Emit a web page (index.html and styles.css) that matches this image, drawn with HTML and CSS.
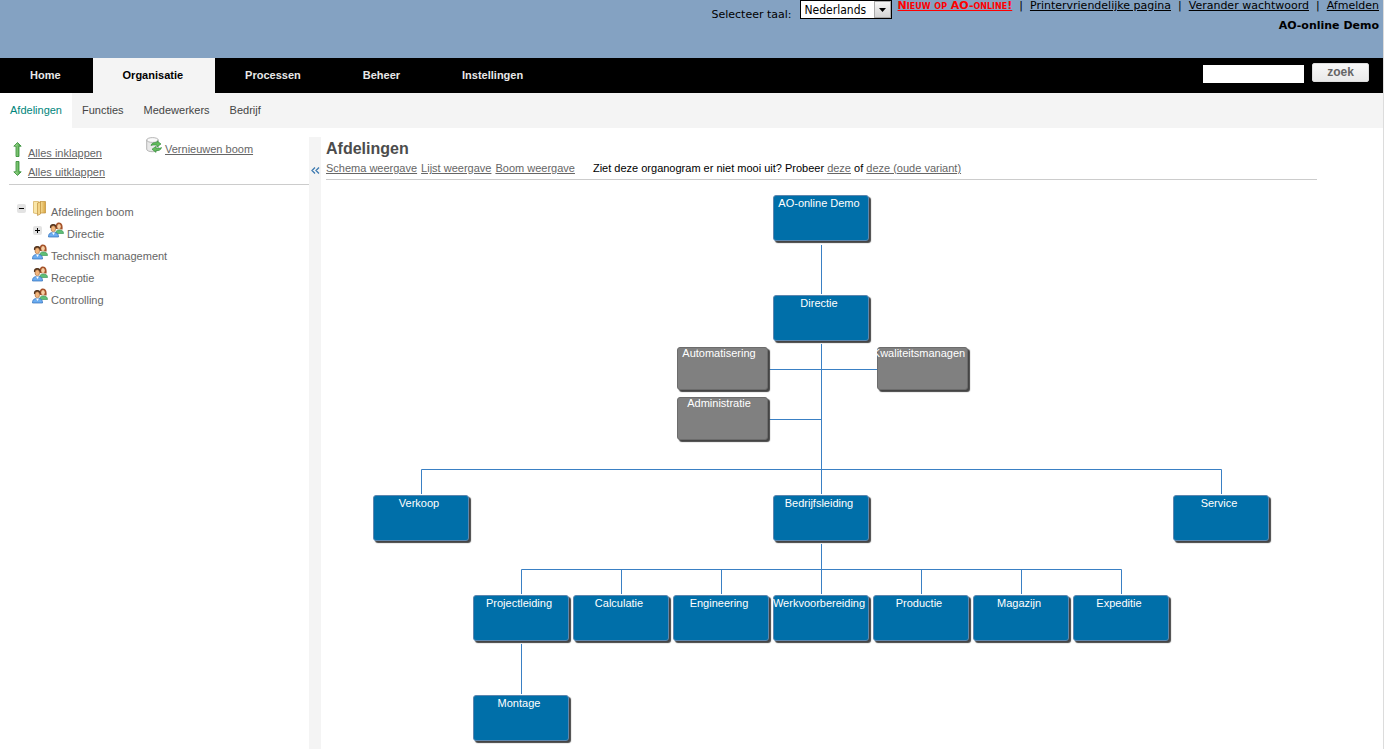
FILE: index.html
```
<!DOCTYPE html>
<html lang="nl">
<head>
<meta charset="utf-8">
<title>AO-online Demo - Afdelingen</title>
<link rel="stylesheet" href="styles.css">
</head>
<body>
<svg class="defs" width="0" height="0" aria-hidden="true">
  <defs>
    <linearGradient id="folderFill" x1="0" x2="1"><stop offset="0" stop-color="#f8e3a0"/><stop offset="1" stop-color="#d9a441"/></linearGradient>
    <linearGradient id="arrowFill" x1="0" x2="1"><stop offset="0" stop-color="#b4e6a0"/><stop offset="1" stop-color="#3d9a3d"/></linearGradient>
  </defs>
  <symbol id="people" viewBox="0 0 16 16">
    <path d="M8 7C7.400 3 8 .5 11 .5s4 3 3.500 7z" fill="#a5532a"/>
    <ellipse cx="11" cy="4.500" rx="1.800" ry="2.500" fill="#f7cfa4"/>
    <path d="M7.500 11.500C8 8.500 9 8 11 8c3 0 4.500 1 4.500 3.500z" fill="#5fbf76" stroke="#2f8f4c" stroke-width=".6"/>
    <path d="M2 6c-.5-3 1-4 3.500-4S9 4 8.200 6.500z" fill="#55361f"/>
    <ellipse cx="5.300" cy="6.800" rx="2.300" ry="3" fill="#f3b67c" stroke="#8a5730" stroke-width=".5"/>
    <path d="M.5 15C.5 11.500 2 10.500 5.500 10.500s5 1 5 4.500z" fill="#6cadf0" stroke="#2c6cb8" stroke-width=".7"/>
    <path d="M4 10.500h3L5.500 13z" fill="#fff"/>
  </symbol>
</svg>

<header class="header">
  <label class="language-label" for="language">Selecteer taal:</label>
  <span class="language">
    <select id="language" class="language-select"><option>Nederlands</option></select>
    <span class="language-button" aria-hidden="true"><svg width="7" height="4" viewBox="0 0 7 4"><path d="M0 0h7L3.500 4z"/></svg></span>
  </span>
  <div class="account">
    <div class="account-links">
      <a class="news" href="#">Nieuw op AO-online!</a>
      <span>|</span>
      <a href="#">Printervriendelijke pagina</a>
      <span>|</span>
      <a href="#">Verander wachtwoord</a>
      <span>|</span>
      <a href="#">Afmelden</a>
    </div>
    <div class="account-name">AO-online Demo</div>
  </div>
</header>

<nav class="nav">
  <a href="#">Home</a>
  <a class="active" href="#">Organisatie</a>
  <a href="#">Processen</a>
  <a href="#">Beheer</a>
  <a href="#">Instellingen</a>
  <form class="search">
    <input class="search-input" type="text" aria-label="Zoekterm">
    <button class="search-button" type="button">zoek</button>
  </form>
</nav>

<nav class="subnav">
  <a class="active" href="#">Afdelingen</a>
  <a href="#">Functies</a>
  <a href="#">Medewerkers</a>
  <a href="#">Bedrijf</a>
</nav>

<div class="content">
  <aside class="sidebar">
    <div class="tools">
      <div class="tools-fold">
        <div class="tool"><svg width="9" height="15" viewBox="0 0 9 15"><path d="M4.500.5l3.700 3.700H6v10.300H3V4.200H.8z" fill="url(#arrowFill)" stroke="#2f8a31" stroke-width=".8"/></svg><a href="#">Alles inklappen</a></div>
        <div class="tool"><svg width="9" height="15" viewBox="0 0 9 15"><path d="M4.500 14.500l3.700-3.700H6V.5H3v10.300H.8z" fill="url(#arrowFill)" stroke="#2f8a31" stroke-width=".8"/></svg><a href="#">Alles uitklappen</a></div>
      </div>
      <div class="tool-refresh">
        <svg width="16" height="16" viewBox="0 0 16 16">
          <path d="M.7 3.200v9c0 1.500 2.500 2.500 5.800 2.500s5.800-1 5.800-2.500v-9z" fill="#e9e9e9" stroke="#a3a3a3" stroke-width=".8"/>
          <ellipse cx="6.500" cy="3" rx="5.800" ry="2.400" fill="#fafafa" stroke="#a3a3a3" stroke-width=".8"/>
          <path d="M5 8.500C5.500 6 8 5.200 11 5.700V3.800l4 3.200-4 3V8.200c-2.500-.4-4.500-.4-6 .3z" fill="#63bd5c" stroke="#2e8735" stroke-width=".6"/>
          <path d="M15.500 10.500c-.5 2.500-2.500 3.500-5.500 3v1.900l-4-3.200 4-2.800v1.700c2.300.4 4.300.2 5.500-.6z" fill="#63bd5c" stroke="#2e8735" stroke-width=".6"/>
        </svg>
        <a href="#">Vernieuwen boom</a>
      </div>
    </div>
    <ul class="tree">
      <li class="row">
        <button class="toggle" type="button" aria-label="Inklappen"><svg width="9" height="9" viewBox="0 0 9 9"><path d="M2 4h5v1H2z"/></svg></button>
        <svg class="tree-icon" width="16" height="16" viewBox="0 0 16 16"><path d="M1.500 1.500h5v12.500l-5-1z" fill="#f9e6a9" stroke="#d3ab55" stroke-width=".7"/><path d="M8 1.500h5.500V13H8z" fill="url(#folderFill)" stroke="#c0913a" stroke-width=".7"/><path d="M5.500 3l3-1v12l-3 1.500z" fill="#f3d487" stroke="#b78732" stroke-width=".6"/></svg>
        <span class="tree-label">Afdelingen boom</span>
      </li>
      <li class="row row-nested">
        <button class="toggle" type="button" aria-label="Uitklappen"><svg width="9" height="9" viewBox="0 0 9 9"><path d="M2 4h2V2h1v2h2v1H5v2H4V5H2z"/></svg></button>
        <svg class="tree-icon" width="16" height="16"><use href="#people"/></svg>
        <span class="tree-label">Directie</span>
      </li>
      <li class="row row-leaf"><svg class="tree-icon" width="16" height="16"><use href="#people"/></svg><span class="tree-label">Technisch management</span></li>
      <li class="row row-leaf"><svg class="tree-icon" width="16" height="16"><use href="#people"/></svg><span class="tree-label">Receptie</span></li>
      <li class="row row-leaf"><svg class="tree-icon" width="16" height="16"><use href="#people"/></svg><span class="tree-label">Controlling</span></li>
    </ul>
  </aside>

  <button class="splitter" type="button" aria-label="Zijbalk verbergen">
    <svg width="9" height="7" viewBox="0 0 9 7"><path d="M4 .5l-3 3 3 3M8 .5l-3 3 3 3" fill="none" stroke="#3d7ab0" stroke-width="1.300"/></svg>
  </button>

  <main class="main">
    <h1 class="title">Afdelingen</h1>
    <div class="views">
      <a href="#">Schema weergave</a>
      <a href="#">Lijst weergave</a>
      <a href="#">Boom weergave</a>
      <p class="hint">Ziet deze organogram er niet mooi uit? Probeer <a href="#">deze</a> of <a href="#">deze (oude variant)</a></p>
    </div>
    <div class="chart">
      <svg class="lines" width="950" height="565" viewBox="0 0 950 565" aria-hidden="true">
        <path d="M495.500 65v49M495.500 164v150M442 189.500h109M442 239.500h53M95.500 314v-24.500h800V314M495.500 364v50M195.500 414v-24.500h600V414M295.500 389v25M395.500 389v25M595.500 389v25M695.500 389v25M195.500 464v50"/>
      </svg>
      <div class="node c5 r1">AO-online Demo</div>
      <div class="node c5 r2">Directie</div>
      <div class="node staff s-left r3">Automatisering</div>
      <div class="node staff s-right r3">Kwaliteitsmanagen</div>
      <div class="node staff s-left r4">Administratie</div>
      <div class="node c1 r5">Verkoop</div>
      <div class="node c5 r5">Bedrijfsleiding</div>
      <div class="node c9 r5">Service</div>
      <div class="node c2 r6">Projectleiding</div>
      <div class="node c3 r6">Calculatie</div>
      <div class="node c4 r6">Engineering</div>
      <div class="node c5 r6">Werkvoorbereiding</div>
      <div class="node c6 r6">Productie</div>
      <div class="node c7 r6">Magazijn</div>
      <div class="node c8 r6">Expeditie</div>
      <div class="node c2 r7">Montage</div>
    </div>
  </main>
</div>
</body>
</html>
```
FILE: styles.css
```
* { box-sizing: border-box; }

body {
  margin: 0;
  min-height: 100vh;
  display: flex;
  flex-direction: column;
  border-right: 1px solid #dcdcdc;
  background: #fff;
  color: #666;
  font: 11px/16px "Liberation Sans", Arial, sans-serif;
}

a { color: inherit; }
button { padding: 0; border: 0; font: inherit; }
svg { flex: none; display: block; }
.defs { position: absolute; }

/* Header */
.header {
  display: flex;
  justify-content: flex-end;
  align-items: flex-start;
  height: 58px;
  padding-right: 4px;
  background: #84a2c2;
  color: #000;
  font: 11px/20px "DejaVu Sans", Verdana, sans-serif;
}
.language-label { padding: 5px 8px 0 0; }
.language { position: relative; margin-right: 6px; }
.language-select {
  display: block;
  appearance: none;
  width: 92px;
  height: 19px;
  padding: 1px 4px 0;
  border: 1px solid #000;
  border-radius: 0;
  background: #fff;
  color: #000;
  font: 12px/17px "DejaVu Sans Condensed", "DejaVu Sans", sans-serif;
}
.language-button {
  position: absolute;
  top: 1px;
  right: 1px;
  display: flex;
  align-items: center;
  justify-content: center;
  width: 17px;
  height: 17px;
  border: 1px solid #aaa;
  background: linear-gradient(#f4f4f4, #d4d4d4);
  pointer-events: none;
}
.account { text-align: right; white-space: nowrap; }
.account-links {
  display: flex;
  gap: 7px;
  height: 16px;
  line-height: 12px;
}
.account-name { font-weight: bold; }
.news { color: #f00; font-weight: bold; font-variant: small-caps; }

/* Navigation */
.nav {
  display: flex;
  height: 35px;
  background: #000;
  font-weight: bold;
  line-height: 35px;
}
.nav > a { padding: 0 32px 0 30px; color: #e8e8e8; text-decoration: none; }
.nav > .active { background: #f4f4f4; color: #000; }
.search {
  display: flex;
  align-items: flex-start;
  gap: 8px;
  margin-left: auto;
  padding: 5px 14px 0 0;
}
.search-input {
  width: 101px;
  height: 18px;
  margin: 2px 0 0;
  padding: 0 2px;
  border: 0;
  border-radius: 0;
  background: #fff;
  font: inherit;
}
.search-button {
  width: 57px;
  height: 19px;
  border: 1px solid #ddd;
  border-radius: 2px;
  background: linear-gradient(#f8f8f8, #e9e9e9);
  color: #666;
  font-size: 12px;
  font-weight: bold;
  line-height: 17px;
}
.subnav {
  display: flex;
  height: 35px;
  background: #f4f4f4;
  line-height: 35px;
}
.subnav a { padding: 0 10px; color: #444; text-decoration: none; }
.subnav .active { background: #fff; color: #00857b; }

/* Content */
.content { display: flex; flex: 1; padding-top: 9px; }
.sidebar { flex: none; width: 309px; padding-left: 9px; }
.tools {
  display: flex;
  height: 48px;
  border-bottom: 1px solid #ccc;
}
.tools-fold { width: 137px; padding: 5px 0 0 4px; }
.tool { display: flex; gap: 6px; height: 19px; }
.tool a { padding-top: 3px; }
.tool-refresh { display: flex; gap: 3px; }
.tool-refresh a { padding-top: 4px; }

.tree { margin: 14px 0 0; padding: 0 0 0 8px; list-style: none; }
.row { display: flex; height: 22px; }
.row-nested { padding-left: 16px; }
.row-leaf { padding-left: 15px; }
.toggle {
  width: 9px;
  height: 9px;
  margin: 5px 6px 0 0;
  border-radius: 2px;
  background: #e3e3e3;
}
.tree-icon { margin-top: 1px; }
.tree-label { padding: 5px 0 0 3px; }

.splitter {
  display: flex;
  flex: none;
  justify-content: center;
  align-items: flex-start;
  width: 12px;
  padding-top: 30px;
  background: #f4f4f4;
}

.main { flex: 1; min-width: 0; padding: 2px 0 0 5px; }
.title { margin: 0; color: #4c4c4c; font-size: 16px; line-height: 20px; }
.views {
  display: flex;
  gap: 4px;
  height: 21px;
  margin-right: 66px;
  border-bottom: 1px solid #ccc;
  line-height: 18px;
}
.hint { margin: 0 0 0 14px; color: #000; }
.hint a { color: #666; }

/* Organisation chart */
.chart { position: relative; height: 565px; }
.lines { position: absolute; top: 0; left: 0; }
.lines path { fill: none; stroke: #3a80c4; stroke-width: 1; }
.node {
  position: absolute;
  display: flex;
  justify-content: center;
  width: 96px;
  height: 46px;
  padding-right: 4px;
  border: 1px solid #5d86ae;
  border-radius: 3px;
  background: #006fa9;
  box-shadow: 2px 2px 1px #444;
  color: #fff;
  line-height: 14px;
  white-space: nowrap;
}
.staff {
  width: 91px;
  height: 43px;
  padding-right: 7px;
  border-color: #6c6c6c;
  background: #808080;
  line-height: 10px;
}
.c1 { left: 47px; }
.c2 { left: 147px; }
.c3 { left: 247px; }
.c4 { left: 347px; }
.c5 { left: 447px; }
.c6 { left: 547px; }
.c7 { left: 647px; }
.c8 { left: 747px; }
.c9 { left: 847px; }
.s-left { left: 351px; }
.s-right { left: 551px; }
.r1 { top: 15px; }
.r2 { top: 115px; }
.r3 { top: 167px; }
.r4 { top: 217px; }
.r5 { top: 315px; }
.r6 { top: 415px; }
.r7 { top: 515px; }
```
